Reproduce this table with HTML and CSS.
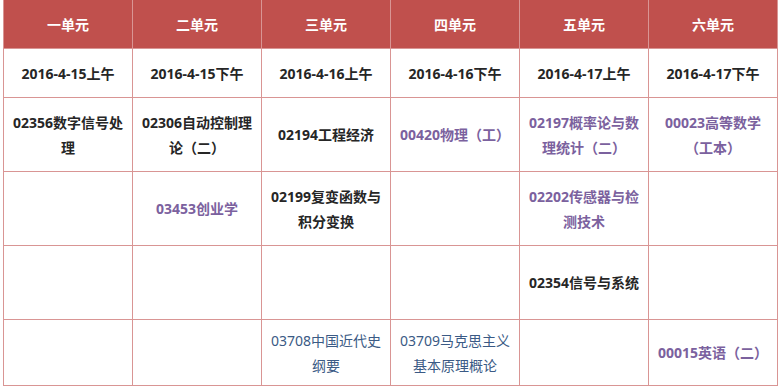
FILE: index.html
```html
<!DOCTYPE html>
<html lang="zh-CN">
<head>
<meta charset="utf-8">
<title>考试安排</title>
<link rel="stylesheet" href="styles.css">
</head>
<body>
<div class="schedule">
  <div class="cell head">一单元</div>
  <div class="cell head">二单元</div>
  <div class="cell head">三单元</div>
  <div class="cell head">四单元</div>
  <div class="cell head">五单元</div>
  <div class="cell head">六单元</div>

  <div class="cell bold">2016-4-15上午</div>
  <div class="cell bold">2016-4-15下午</div>
  <div class="cell bold">2016-4-16上午</div>
  <div class="cell bold">2016-4-16下午</div>
  <div class="cell bold">2016-4-17上午</div>
  <div class="cell bold">2016-4-17下午</div>

  <div class="cell bold">02356数字信号处理</div>
  <div class="cell bold">02306自动控制理论（二）</div>
  <div class="cell bold">02194工程经济</div>
  <div class="cell purple">00420物理（工）</div>
  <div class="cell purple">02197概率论与数理统计（二）</div>
  <div class="cell purple">00023高等数学（工本）</div>

  <div class="cell"></div>
  <div class="cell purple">03453创业学</div>
  <div class="cell bold">02199复变函数与积分变换</div>
  <div class="cell"></div>
  <div class="cell purple">02202传感器与检测技术</div>
  <div class="cell"></div>

  <div class="cell"></div>
  <div class="cell"></div>
  <div class="cell"></div>
  <div class="cell"></div>
  <div class="cell bold">02354信号与系统</div>
  <div class="cell"></div>

  <div class="cell"></div>
  <div class="cell"></div>
  <div class="cell blue">03708中国近代史纲要</div>
  <div class="cell blue">03709马克思主义基本原理概论</div>
  <div class="cell"></div>
  <div class="cell purple">00015英语（二）</div>
</div>
</body>
</html>
```

FILE: styles.css
```css
html, body {
  margin: 0;
  padding: 0;
  background: #ffffff;
}

.schedule {
  display: grid;
  grid-template-columns: repeat(6, 128px);
  grid-template-rows: 48px 48px 73px 73px 73px 65px;
  gap: 1px;
  width: 775px;
  box-sizing: border-box;
  margin-left: 3px;
  padding: 0 1px 1px 1px;
  background: #d99594;
  font-family: "Noto Sans", "Noto Sans CJK SC", sans-serif;
  font-size: 14px;
  line-height: 25px;
}

.cell {
  background: #ffffff;
  display: flex;
  align-items: center;
  justify-content: center;
  text-align: center;
  padding: 0 6px;
  color: #262626;
}

.head {
  background: #c0504d;
  color: #ffffff;
  font-weight: 700;
}

.bold {
  font-weight: 700;
  color: #262626;
}

.purple {
  font-weight: 700;
  color: #7b619e;
}

.blue {
  font-weight: 400;
  color: #3a5a85;
}
```
